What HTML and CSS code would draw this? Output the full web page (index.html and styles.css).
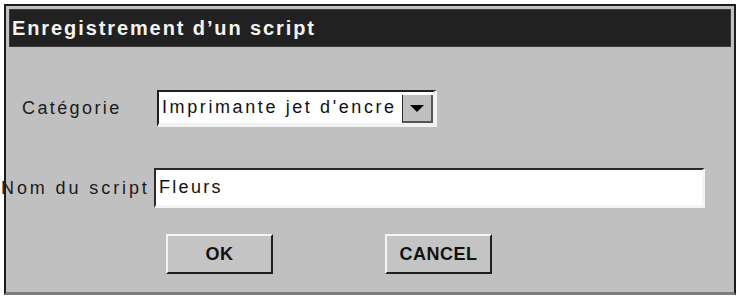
FILE: index.html
```html
<!DOCTYPE html>
<html>
<head lang="fr">
    <meta charset="UTF-8">
    <title>Enregistrement d'un script</title>
    <link rel="stylesheet" href="styles.css">
</head>
<body>
<div class="dialog">
    <div class="dialog-title">Enregistrement d’un script</div>
    <div class="dialog-body">
        <div class="row row-category">
            <span class="label">Catégorie</span>
            <div class="popup">
                <span class="popup-value">Imprimante jet d'encre</span>
                <span class="popup-arrow"><span class="arrow"></span></span>
            </div>
        </div>
        <div class="row row-name">
            <span class="label label-name">Nom du script</span>
            <div class="field">Fleurs</div>
        </div>
        <div class="row row-buttons">
            <button class="btn btn-ok">OK</button>
            <button class="btn btn-cancel">CANCEL</button>
        </div>
    </div>
</div>
</body>
</html>
```

FILE: styles.css
```css
body{
    margin: 0;
    background: #ffffff;
    font-family: "Liberation Sans", Arial, sans-serif;
}
.dialog{
    margin: 4px 0 0 4px;
    width: 732px;
    height: 291px;
    box-sizing: border-box;
    border: 2px solid #1c1c1c;
    border-bottom: 3px solid #7c7c7c;
    padding: 3px 3px 0 3px;
    background: #c0c0c0;
    box-shadow: 0 6px 0 #141414;
}
.dialog-title{
    height: 38px;
    box-sizing: border-box;
    border: 1px solid #3c3c3c;
    background: #212121;
    color: #f4f4f4;
    font: bold 20px/36px "Liberation Sans", Arial, sans-serif;
    letter-spacing: 1.9px;
    padding-left: 2px;
}
.dialog-body{
    display: flex;
    flex-direction: column;
}
.row{
    display: flex;
    align-items: center;
}
.label{
    font-size: 18px;
    letter-spacing: 2.4px;
    color: #1a1a1a;
}
.row-category{
    margin-top: 43px;
    padding-left: 13px;
}
.row-category .label{
    width: 135px;
}
.popup{
    display: flex;
    width: 280px;
    height: 37px;
    box-sizing: border-box;
    border: 2px solid #1e1e1e;
    border-right: 4px solid #f2f2f2;
    border-bottom: 4px solid #f2f2f2;
    background: #ffffff;
}
.popup-value{
    flex: 1;
    padding-left: 3px;
    font-size: 18px;
    line-height: 31px;
    letter-spacing: 2.6px;
    color: #111111;
    white-space: nowrap;
    overflow: hidden;
}
.popup-arrow{
    display: flex;
    align-items: center;
    justify-content: center;
    width: 31px;
    margin: 3px 0 0 0;
    box-sizing: border-box;
    border-left: 1px solid #2a2a2a;
    border-right: 2px solid #555555;
    border-bottom: 2px solid #555555;
    background: #c0c0c0;
}
.arrow{
    width: 0;
    height: 0;
    border-left: 7px solid transparent;
    border-right: 7px solid transparent;
    border-top: 7px solid #000000;
}
.row-name{
    margin-top: 41px;
    margin-left: -8px;
}
.label-name{
    letter-spacing: 2.9px;
    width: 153px;
}
.field{
    width: 551px;
    height: 40px;
    box-sizing: border-box;
    border: 2px solid #2a2a2a;
    border-right: 3px solid #f4f4f4;
    border-bottom: 3px solid #f4f4f4;
    background: #ffffff;
    padding-left: 3px;
    font-size: 18px;
    line-height: 34px;
    letter-spacing: 2.3px;
    color: #111111;
}
.row-buttons{
    margin-top: 26px;
    padding-left: 157px;
    gap: 112px;
}
.btn{
    width: 107px;
    height: 40px;
    box-sizing: border-box;
    border: 2px solid #1e1e1e;
    border-top-color: #f4f4f4;
    border-left-color: #f4f4f4;
    background: #c4c4c4;
    color: #111111;
    font: bold 18px "Liberation Sans", Arial, sans-serif;
    letter-spacing: 0.5px;
    padding: 0;
}
```
